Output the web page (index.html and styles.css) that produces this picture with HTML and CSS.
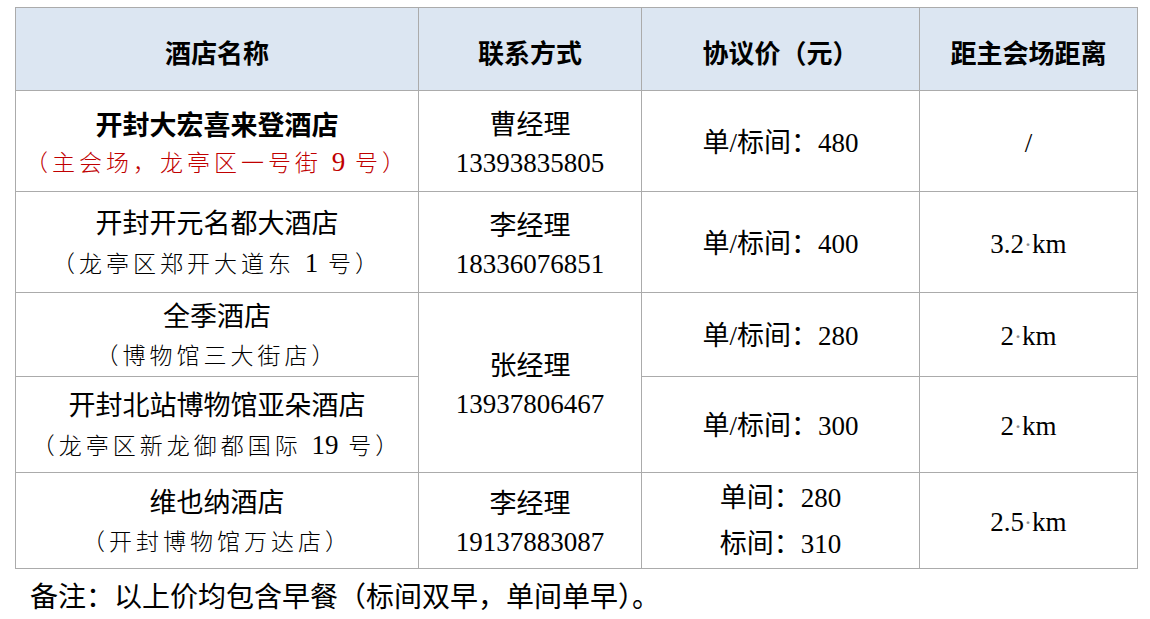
FILE: index.html
```html
<!DOCTYPE html>
<html lang="zh-CN">
<head>
<meta charset="utf-8">
<title>酒店信息</title>
<link rel="stylesheet" href="styles.css">
</head>
<body>
<div class="page">
  <table class="hotels">
    <colgroup>
      <col class="c1"><col class="c2"><col class="c3"><col class="c4">
    </colgroup>
    <thead>
      <tr class="r-head">
        <th>酒店名称</th>
        <th>联系方式</th>
        <th>协议价（元）</th>
        <th>距主会场距离</th>
      </tr>
    </thead>
    <tbody>
      <tr class="r1">
        <td><div class="name bold">开封大宏喜来登酒店</div><div class="sub red">（主会场，龙亭区一号街 <span class="n">9</span> 号）</div></td>
        <td><div class="name">曹经理</div><div class="phone">13393835805</div></td>
        <td>单/标间：480</td>
        <td>/</td>
      </tr>
      <tr class="r2">
        <td><div class="name">开封开元名都大酒店</div><div class="sub">（龙亭区郑开大道东 <span class="n">1</span> 号）</div></td>
        <td><div class="name">李经理</div><div class="phone">18336076851</div></td>
        <td>单/标间：400</td>
        <td>3.2<span class="dot">·</span>km</td>
      </tr>
      <tr class="r3">
        <td><div class="name">全季酒店</div><div class="sub">（博物馆三大街店）</div></td>
        <td rowspan="2"><div class="name">张经理</div><div class="phone">13937806467</div></td>
        <td>单/标间：280</td>
        <td>2<span class="dot">·</span>km</td>
      </tr>
      <tr class="r4">
        <td><div class="name">开封北站博物馆亚朵酒店</div><div class="sub">（龙亭区新龙御都国际 <span class="n">19</span> 号）</div></td>
        <td>单/标间：300</td>
        <td>2<span class="dot">·</span>km</td>
      </tr>
      <tr class="r5">
        <td><div class="name">维也纳酒店</div><div class="sub">（开封博物馆万达店）</div></td>
        <td><div class="name">李经理</div><div class="phone">19137883087</div></td>
        <td class="split"><div>单间：280</div><div>标间：310</div></td>
        <td>2.5<span class="dot">·</span>km</td>
      </tr>
    </tbody>
  </table>
  <p class="note">备注：以上价均包含早餐（标间双早，单间单早）。</p>
</div>
</body>
</html>
```

FILE: styles.css
```css
html, body {
  margin: 0;
  padding: 0;
  background: #ffffff;
}

.page {
  padding: 7px 0 0 15px;
}

.hotels {
  border-collapse: collapse;
  table-layout: fixed;
  width: 1123px;
  font-family: "Liberation Serif", "Noto Sans CJK SC", serif;
  font-size: 27px;
  color: #000;
}

.c1 { width: 403px; }
.c2 { width: 223px; }
.c3 { width: 278px; }
.c4 { width: 218px; }

.hotels th,
.hotels td {
  border: 1px solid #ababab;
  text-align: center;
  vertical-align: middle;
  padding: 4px 0 0 0;
  line-height: 39px;
}

.hotels th {
  background: #dce6f2;
  font-family: "Noto Sans CJK SC", sans-serif;
  font-weight: 700;
  font-size: 26px;
  padding-top: 4px;
}

.r-head { height: 83px; }
.r1 { height: 101px; }
.r2 { height: 101px; }
.r3 { height: 84px; }
.r4 { height: 96px; }
.r5 { height: 96px; }

.name {
  line-height: 39px;
}

.bold {
  font-weight: 700;
  font-family: "Noto Sans CJK SC", sans-serif;
}

.sub {
  font-family: "Liberation Serif", "Noto Sans CJK SC", serif;
  font-size: 23px;
  font-weight: 300;
  letter-spacing: 4px;
  line-height: 39px;
}

.sub .n {
  font-size: 27px;
  letter-spacing: 0;
}

.red {
  color: #c00000;
}

.phone {
  line-height: 36px;
}

.dot {
  color: #8a8a8a;
  font-size: 24px;
  vertical-align: 1px;
}

.hotels td.split {
  padding-top: 0;
}

.split div {
  line-height: 46px;
}

.note {
  margin: 8px 0 0 15px;
  font-family: "Noto Sans CJK SC", sans-serif;
  font-size: 28px;
  line-height: 36px;
  color: #000;
}
```
